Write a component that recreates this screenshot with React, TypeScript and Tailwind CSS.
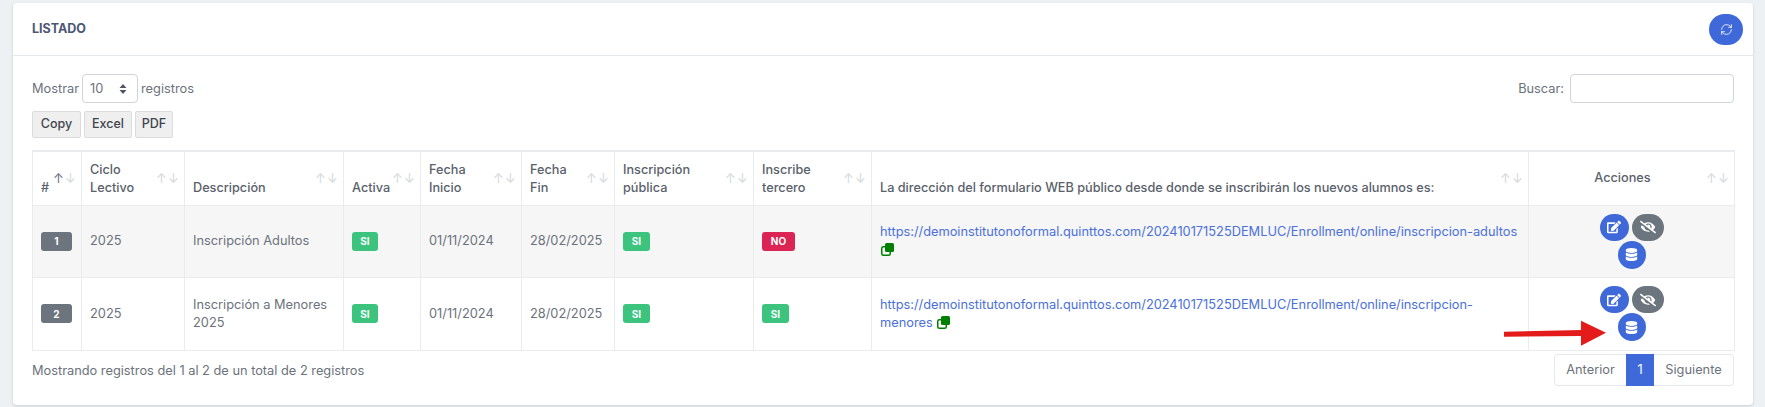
import { FaDatabase, FaEdit, FaEyeSlash } from "react-icons/fa"
import { RefreshCw } from "lucide-react"

type Row = {
  id: number
  desc: string
  tercero: boolean
  url: string
}

const rows: Row[] = [
  { id: 1, desc: "Inscripción Adultos", tercero: false, url: "https://demoinstitutonoformal.quinttos.com/202410171525DEMLUC/Enrollment/online/inscripcion-adultos" },
  { id: 2, desc: "Inscripción a Menores 2025", tercero: true, url: "https://demoinstitutonoformal.quinttos.com/202410171525DEMLUC/Enrollment/online/inscripcion-menores" },
]

function SortArrows({ active }: { active?: boolean }) {
  return (
    <span className="absolute right-[5px] top-[15px] flex gap-[1px] text-[13px] leading-[22px] font-normal text-[#d5d8dc]">
      <span className={active ? "w-[11px] text-center text-[#6b7280]" : "w-[11px] text-center"}>↑</span>
      <span className="w-[11px] text-center">↓</span>
    </span>
  )
}

function Th({ children, active, middle }: { children: React.ReactNode; active?: boolean; middle?: boolean }) {
  return (
    <th className={`relative border border-[#e9ecef] py-[8px] pl-2 text-[12.7px] font-medium text-[#5a616b] ${middle ? "pr-[26px] text-center align-middle" : "pr-2 text-left align-bottom"}`}>
      {children}
      <SortArrows active={active} />
    </th>
  )
}

function Badge({ children, color, width }: { children: React.ReactNode; color: string; width: string }) {
  return (
    <span className={`inline-flex h-[19px] items-center justify-center rounded-[3px] align-middle text-[10px] font-bold text-white ${color} ${width}`}>
      {children}
    </span>
  )
}

function CopyIcon() {
  return (
    <svg className="ml-[1px] inline-block align-[-2px]" width="13" height="13" viewBox="0 0 13 13">
      <rect x="0.75" y="3.75" width="8.5" height="8.5" rx="1.5" fill="none" stroke="#008000" strokeWidth="1.5" />
      <rect x="4" y="0" width="9" height="9" rx="1.5" fill="#008000" />
    </svg>
  )
}

function Actions() {
  return (
    <div className="flex flex-col items-center">
      <div className="flex gap-[3px]">
        <button className="flex h-[27px] w-[29px] items-center justify-center rounded-full bg-[#3f69d9] text-[14px] text-white"><FaEdit /></button>
        <button className="flex h-[27px] w-[32px] items-center justify-center rounded-full bg-[#6c757d] text-[16px] text-white"><FaEyeSlash /></button>
      </div>
      <button className="flex h-[28px] w-[28px] items-center justify-center rounded-full bg-[#3f69d9] text-[13px] text-white"><FaDatabase /></button>
    </div>
  )
}

const btnClass = "h-[27px] rounded-[2px] border border-[#dcdcdc] bg-[#efefef] text-[12.5px] font-medium text-[#3f454d]"

export default function App() {
  return (
    <div className="h-[407px] overflow-hidden bg-[#eef1f4] pl-[13px] pt-[3px] font-['Inter',sans-serif] text-[12.8px] text-[#6c727c]">
      <div className="relative h-[402px] w-[1740px] rounded-[4px] bg-white shadow-[0_1px_3px_rgba(0,0,0,0.15)]">
        {/* Header */}
        <div className="flex h-[53px] items-center justify-between border-b border-[#e4e7ec] pl-[19px] pr-[10px]">
          <h2 className="text-[12.5px] font-bold text-[#4d5875]">LISTADO</h2>
          <button className="flex h-[31px] w-[34px] items-center justify-center rounded-full bg-[#3f69d9] text-white">
            <RefreshCw size={13} strokeWidth={1.5} />
          </button>
        </div>

        <div className="pl-[19px] pr-[19px] pt-[18px]">
          {/* Toolbar */}
          <div className="flex justify-between">
            <div className="flex h-[29px] items-center gap-[3px]">
              <span>Mostrar</span>
              <div className="flex h-[29px] w-[56px] items-center justify-between rounded-[4px] border border-[#ced4da] pl-[7px] pr-[10px]">
                <span>10</span>
                <svg width="8" height="12" viewBox="0 0 8 12" fill="#4f5661"><path d="M4 1 7.5 5H.5zM4 11 .5 7h7z" /></svg>
              </div>
              <span>registros</span>
            </div>
            <div className="flex h-[29px] items-center gap-[6px]">
              <span>Buscar:</span>
              <input className="h-[29px] w-[164px] rounded-[4px] border border-[#ced4da] bg-white" />
            </div>
          </div>

          <div className="mt-[8px] flex gap-[3px]">
            <button className={`${btnClass} w-[49px]`}>Copy</button>
            <button className={`${btnClass} w-[48px]`}>Excel</button>
            <button className={`${btnClass} w-[38px]`}>PDF</button>
          </div>

          {/* Table */}
          <table className="mt-[12px] w-[1702px] table-fixed border-collapse border-t-2 border-[#e9ecef] leading-[18px]">
            <colgroup>
              <col className="w-[49px]" />
              <col className="w-[103px]" />
              <col className="w-[159px]" />
              <col className="w-[77px]" />
              <col className="w-[101px]" />
              <col className="w-[93px]" />
              <col className="w-[139px]" />
              <col className="w-[118px]" />
              <col className="w-[657px]" />
              <col className="w-[206px]" />
            </colgroup>
            <thead>
              <tr className="h-[54px]">
                <Th active>#</Th>
                <Th>Ciclo<br />Lectivo</Th>
                <Th>Descripción</Th>
                <Th>Activa</Th>
                <Th>Fecha<br />Inicio</Th>
                <Th>Fecha<br />Fin</Th>
                <Th>Inscripción<br />pública</Th>
                <Th>Inscribe<br />tercero</Th>
                <Th>La dirección del formulario WEB público desde donde se inscribirán los nuevos alumnos es:</Th>
                <Th middle>Acciones</Th>
              </tr>
            </thead>
            <tbody>
              {rows.map((row) => (
                <tr key={row.id} className={row.id === 1 ? "h-[72px] bg-[#f6f6f6]" : "h-[73px]"}>
                  <td className="border border-[#e9ecef] px-2"><Badge color="bg-[#6c757d]" width="w-[31px]">{row.id}</Badge></td>
                  <td className="border border-[#e9ecef] px-2">2025</td>
                  <td className="border border-[#e9ecef] px-2">{row.desc}</td>
                  <td className="border border-[#e9ecef] px-2"><Badge color="bg-[#3cc47f]" width="w-[26px]">SI</Badge></td>
                  <td className="border border-[#e9ecef] px-2">01/11/2024</td>
                  <td className="border border-[#e9ecef] px-2">28/02/2025</td>
                  <td className="border border-[#e9ecef] px-2"><Badge color="bg-[#3cc47f]" width="w-[27px]">SI</Badge></td>
                  <td className="border border-[#e9ecef] px-2">
                    {row.tercero ? (
                      <Badge color="bg-[#3cc47f]" width="w-[27px]">SI</Badge>
                    ) : (
                      <Badge color="bg-[#dc2454]" width="w-[33px]">NO</Badge>
                    )}
                  </td>
                  <td className="border border-[#e9ecef] px-2 text-[#4a70dc]">
                    {row.url} <CopyIcon />
                  </td>
                  <td className="border border-[#e9ecef]"><Actions /></td>
                </tr>
              ))}
            </tbody>
          </table>

          {/* Footer */}
          <div className="mt-[3px] flex items-start justify-between">
            <span className="mt-[7px]">Mostrando registros del 1 al 2 de un total de 2 registros</span>
            <div className="flex h-[32px] items-center rounded-[4px] border border-[#e4e7ec]">
              <span className="flex w-[71px] justify-center">Anterior</span>
              <span className="flex h-[32px] w-[28px] items-center justify-center bg-[#3f69d9] text-white">1</span>
              <span className="flex w-[79px] justify-center">Siguiente</span>
            </div>
          </div>
        </div>

        {/* Annotation arrow */}
        <svg className="absolute left-[1491px] top-[317px]" width="103" height="27" viewBox="0 0 103 27">
          <path d="M0 11.7 77 10V.7L102 12.7 77 25.7V16L0 16.7Z" fill="#e31b1b" />
        </svg>
      </div>
    </div>
  )
}
